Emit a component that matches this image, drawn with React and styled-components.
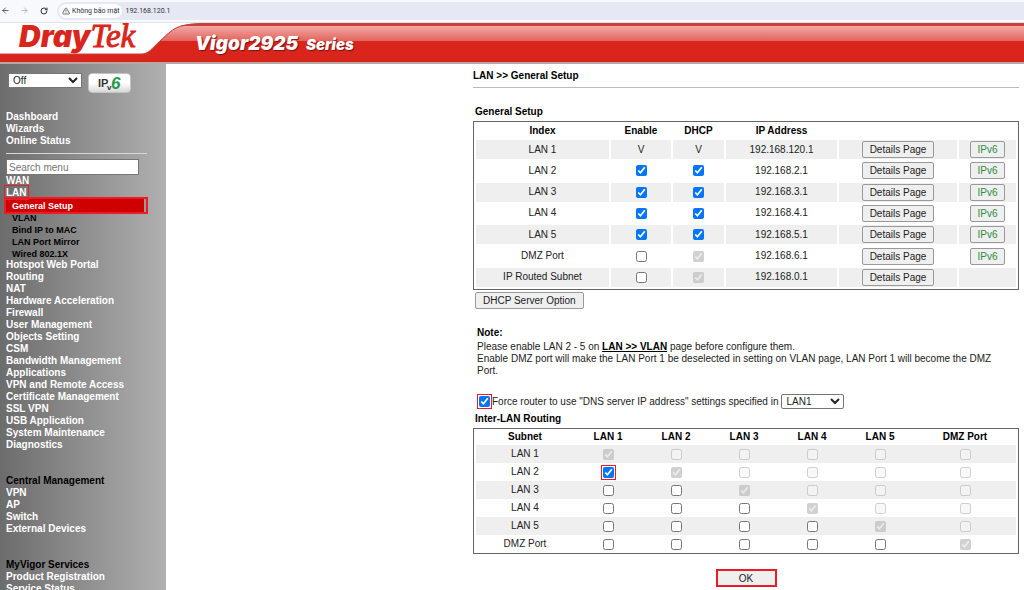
import React from "react";
import styled, { createGlobalStyle, css } from "styled-components";
import { ArrowLeft, ArrowRight, RotateCw, TriangleAlert } from "lucide-react";

const menuTop = ["Dashboard", "Wizards", "Online Status"];

const lanPages = ["General Setup", "VLAN", "Bind IP to MAC", "LAN Port Mirror", "Wired 802.1X"];

const menuMain = [
    "Hotspot Web Portal",
    "Routing",
    "NAT",
    "Hardware Acceleration",
    "Firewall",
    "User Management",
    "Objects Setting",
    "CSM",
    "Bandwidth Management",
    "Applications",
    "VPN and Remote Access",
    "Certificate Management",
    "SSL VPN",
    "USB Application",
    "System Maintenance",
    "Diagnostics",
];

const menuCentral = ["VPN", "AP", "Switch", "External Devices"];
const menuServices = ["Product Registration", "Service Status"];

const subnets = [
    { name: "LAN 1", ip: "192.168.120.1", fixed: true, ipv6: true },
    { name: "LAN 2", ip: "192.168.2.1", enable: true, ipv6: true },
    { name: "LAN 3", ip: "192.168.3.1", enable: true, ipv6: true },
    { name: "LAN 4", ip: "192.168.4.1", enable: true, ipv6: true },
    { name: "LAN 5", ip: "192.168.5.1", enable: true, ipv6: true },
    { name: "DMZ Port", ip: "192.168.6.1", enable: false, locked: true, ipv6: true },
    { name: "IP Routed Subnet", ip: "192.168.0.1", enable: false, locked: true },
];

const routes = ["LAN 1", "LAN 2", "LAN 3", "LAN 4", "LAN 5", "DMZ Port"];

function BrowserBar() {
    return (
        <BarLayout>
            <BarButton aria-label="Back">
                <ArrowLeft size={9} strokeWidth={2} />
            </BarButton>
            <BarButton aria-label="Forward" $dim>
                <ArrowRight size={9} strokeWidth={2} />
            </BarButton>
            <BarButton aria-label="Reload">
                <RotateCw size={8} strokeWidth={3} />
            </BarButton>
            <AddressBar>
                <SecurityChip>
                    <TriangleAlert size={8} strokeWidth={2} />
                    <span>Không bảo mật</span>
                </SecurityChip>
                <span>192.168.120.1</span>
            </AddressBar>
        </BarLayout>
    );
}

function Banner() {
    return (
        <BannerLayout>
            <BannerBrand>
                <BannerCurve viewBox="0 0 200 40" aria-hidden="true">
                    <path d="M0 0H200C176 1 174 5 160 18C151 26 149 31 141 31H0Z" fill="#fff" />
                    <path
                        d="M200 1C176 2 174 5 160 18C151 26 149 31 141 31H0"
                        fill="none"
                        stroke="#c4443c"
                        strokeWidth="1"
                    />
                </BannerCurve>
                <BrandName>
                    Dray<i>Tek</i>
                </BrandName>
            </BannerBrand>
            <ModelName>
                Vigor2925 <small>Series</small>
            </ModelName>
        </BannerLayout>
    );
}

function MenuLinks({ items }) {
    return items.map((item) => (
        <li key={item}>
            <MenuLink href="#">{item}</MenuLink>
        </li>
    ));
}

function Sidebar() {
    return (
        <SidebarLayout>
            <SidebarTools>
                <ModeSelect aria-label="Auto logout" defaultValue="Off">
                    <option>Off</option>
                </ModeSelect>
                <Ipv6Badge aria-label="IPv6">
                    <svg width="26" height="18" viewBox="0 0 26 18">
                        <text x="1" y="13" fontSize="11" fontWeight="700" fill="#333">
                            IP
                        </text>
                        <text x="10" y="16" fontSize="8" fontWeight="700" fill="#333">
                            v
                        </text>
                        <text x="14" y="15" fontSize="17" fontWeight="700" fontStyle="italic" fill="#1f9a48">
                            6
                        </text>
                    </svg>
                </Ipv6Badge>
            </SidebarTools>
            <MenuList>
                <MenuLinks items={menuTop} />
            </MenuList>
            <MenuRule />
            <SearchInput aria-label="Search menu" placeholder="Search menu" />
            <MenuList>
                <MenuLinks items={["WAN"]} />
                <li>
                    <MenuLink href="#" $marked>
                        LAN
                    </MenuLink>
                </li>
                {lanPages.map((page, i) => (
                    <li key={page}>
                        <SubLink href="#" $active={i === 0}>
                            {page}
                        </SubLink>
                    </li>
                ))}
                <MenuLinks items={menuMain} />
            </MenuList>
            <MenuTitle>Central Management</MenuTitle>
            <MenuList>
                <MenuLinks items={menuCentral} />
            </MenuList>
            <MenuTitle>MyVigor Services</MenuTitle>
            <MenuList>
                <MenuLinks items={menuServices} />
            </MenuList>
        </SidebarLayout>
    );
}

function SubnetTable() {
    return (
        <SetupTable>
            <colgroup>
                {[133, 60, 51, 111, 118, 57].map((width, i) => (
                    <Col key={i} $width={width} />
                ))}
            </colgroup>
            <thead>
                <tr>
                    <th>Index</th>
                    <th>Enable</th>
                    <th>DHCP</th>
                    <th>IP Address</th>
                    <th></th>
                    <th></th>
                </tr>
            </thead>
            <tbody>
                {subnets.map((row) => (
                    <tr key={row.name}>
                        <td>{row.name}</td>
                        <td>
                            {row.fixed ? (
                                "V"
                            ) : (
                                <Check aria-label={`Enable ${row.name}`} defaultChecked={row.enable} />
                            )}
                        </td>
                        <td>
                            {row.fixed ? (
                                "V"
                            ) : (
                                <Check
                                    aria-label={`DHCP ${row.name}`}
                                    defaultChecked
                                    disabled={row.locked}
                                />
                            )}
                        </td>
                        <td>{row.ip}</td>
                        <td>
                            <Button>Details Page</Button>
                        </td>
                        <td>{row.ipv6 && <Button $green>IPv6</Button>}</td>
                    </tr>
                ))}
            </tbody>
        </SetupTable>
    );
}

function RoutingTable() {
    return (
        <RouteTable>
            <colgroup>
                {[98, 68, 68, 68, 68, 68, 102].map((width, i) => (
                    <Col key={i} $width={width} />
                ))}
            </colgroup>
            <thead>
                <tr>
                    <th>Subnet</th>
                    {routes.map((name) => (
                        <th key={name}>{name}</th>
                    ))}
                </tr>
            </thead>
            <tbody>
                {routes.map((from, r) => (
                    <tr key={from}>
                        <td>{from}</td>
                        {routes.map((to, c) => {
                            const marked = r === 1 && c === 0;
                            return (
                                <td key={to}>
                                    <CheckFrame $marked={marked}>
                                        <Check
                                            aria-label={`${from} to ${to}`}
                                            defaultChecked={r === c || marked}
                                            disabled={c >= r}
                                        />
                                    </CheckFrame>
                                </td>
                            );
                        })}
                    </tr>
                ))}
            </tbody>
        </RouteTable>
    );
}

function App() {
    return (
        <>
            <GlobalStyle />
            <Page>
                <BrowserBar />
                <Banner />
                <Body>
                    <Sidebar />
                    <Main>
                        <PageTitle>LAN &gt;&gt; General Setup</PageTitle>
                        <SectionTitle>General Setup</SectionTitle>
                        <SubnetTable />
                        <OptionRow>
                            <Button>DHCP Server Option</Button>
                        </OptionRow>
                        <Note>
                            <h3>Note:</h3>
                            <p>
                                Please enable LAN 2 - 5 on <a href="#">LAN &gt;&gt; VLAN</a> page before
                                configure them.
                            </p>
                            <p>
                                Enable DMZ port will make the LAN Port 1 be deselected in setting on VLAN page,
                                LAN Port 1 will become the DMZ Port.
                            </p>
                        </Note>
                        <DnsRow>
                            <CheckFrame $marked>
                                <Check id="force-dns" defaultChecked />
                            </CheckFrame>
                            <label htmlFor="force-dns">
                                Force router to use "DNS server IP address" settings specified in
                            </label>
                            <LanSelect aria-label="DNS subnet" defaultValue="LAN1">
                                <option>LAN1</option>
                            </LanSelect>
                        </DnsRow>
                        <SectionTitle>Inter-LAN Routing</SectionTitle>
                        <RoutingTable />
                        <SubmitRow>
                            <OkButton>OK</OkButton>
                        </SubmitRow>
                    </Main>
                </Body>
            </Page>
        </>
    );
}

const GlobalStyle = createGlobalStyle`
    * {
        box-sizing: border-box;
    }
    body {
        margin: 0;
        background: #fff;
        color: #222;
        font-family: "Liberation Sans", Arial, sans-serif;
        font-size: 10px;
        line-height: 12px;
    }
    button, input, select {
        font: inherit;
    }
    h1, h2, h3, p, ul {
        margin: 0;
        padding: 0;
        font-size: inherit;
    }
`;

const Page = styled.div`
    height: 100vh;
    display: flex;
    flex-direction: column;
    overflow: hidden;
`;

// browser bar

const BarLayout = styled.div`
    flex: none;
    height: 23px;
    padding-bottom: 1px;
    display: flex;
    align-items: center;
    background: #f8f9fd;
    border-bottom: 1px solid #dfe1e8;
    color: #333;
    font-family: Roboto, "Noto Sans", sans-serif;
    font-size: 7px;
`;

const BarButton = styled.button.attrs({ type: "button" })`
    width: 19px;
    height: 18px;
    padding: 0 8px 0 0;
    display: flex;
    align-items: center;
    justify-content: center;
    background: none;
    border: none;
    color: ${(props) => (props.$dim ? "#a5a7ad" : "#333")};
`;

const AddressBar = styled.div`
    flex: 1;
    height: 18px;
    padding: 0 2px;
    display: flex;
    align-items: center;
    gap: 3px;
    background: #e6e9f4;
    border-radius: 9px 0 0 9px;
`;

const SecurityChip = styled.div`
    height: 14px;
    padding: 0 3px;
    display: flex;
    align-items: center;
    gap: 2px;
    background: #fbfcff;
    border-radius: 7px;
`;

// banner

const BannerLayout = styled.header`
    flex: none;
    height: 41px;
    display: flex;
    border-bottom: 2px solid #b9a7a3;
    background: linear-gradient(
        #c9423a 0 3px,
        #f3a8a4 3px,
        #e2645e 18px,
        #da251d 18px
    );
`;

const BannerBrand = styled.div`
    position: relative;
    width: 195px;
    padding-left: 19px;
`;

const BannerCurve = styled.svg`
    position: absolute;
    top: 0;
    left: 0;
    width: 200px;
    height: 40px;
`;

const BrandName = styled.div`
    position: relative;
    color: #da251d;
    font: italic 900 30px/26px Inter, sans-serif;
    i {
        font: italic 400 33px/26px "Liberation Serif", serif;
        -webkit-text-stroke: 1px #da251d;
    }
`;

const ModelName = styled.div`
    color: #fff;
    font: italic 900 19px/41px Inter, sans-serif;
    text-shadow: 1px 1px 1px #7c1510;
    white-space: nowrap;
    small {
        margin-left: 4px;
        font-size: 15px;
    }
`;

// sidebar

const Body = styled.div`
    flex: 1;
    min-height: 0;
    display: flex;
`;

const SidebarLayout = styled.nav`
    flex: none;
    width: 166px;
    padding: 9px 0 0 6px;
    overflow: hidden;
    background: linear-gradient(90deg, #6c6c6c, #b0b0b0);
    font-weight: bold;
`;

const SidebarTools = styled.div`
    padding-left: 2px;
    margin-bottom: 18px;
    display: flex;
    align-items: flex-start;
    gap: 6px;
`;

const ModeSelect = styled.select`
    width: 74px;
    height: 15px;
    background: #fff;
    border: 1px solid #767676;
    color: #222;
    font-weight: normal;
`;

const Ipv6Badge = styled.button.attrs({ type: "button" })`
    width: 43px;
    height: 20px;
    padding: 0;
    display: flex;
    align-items: center;
    justify-content: center;
    background: linear-gradient(#fff 50%, #d8d8d8);
    border: 1px solid #c4c4c4;
    border-radius: 4px;
`;

const MenuList = styled.ul`
    list-style: none;
    li {
        height: 12px;
    }
`;

const MenuLink = styled.a`
    color: #fff;
    text-decoration: none;
    ${(props) =>
        props.$marked &&
        css`
            outline: 1px solid #ed1c24;
            outline-offset: 1px;
        `}
`;

const SubLink = styled.a`
    display: block;
    width: 138px;
    padding: 1px 0 0 6px;
    color: #000;
    font-size: 9px;
    text-decoration: none;
    ${(props) =>
        props.$active &&
        css`
            background: #cf0000;
            border-right: 2px solid #999;
            width: 140px;
            color: #fff;
            outline: 2px solid #ed1c24;
        `}
`;

const MenuRule = styled.hr`
    width: 141px;
    height: 1px;
    margin: 6px 0 5px;
    border: none;
    background: #d8d8d8;
`;

const SearchInput = styled.input.attrs({ type: "search" })`
    display: block;
    width: 133px;
    height: 16px;
    padding: 0 2px;
    border: 1px solid #767676;
    background: #fff;
    font-weight: normal;
    &::placeholder {
        color: #757575;
    }
`;

const MenuTitle = styled.h2`
    margin-top: 24px;
    color: #000;
`;

// main

const Main = styled.main`
    flex: 1;
    min-width: 0;
    padding: 6px 5px 0 307px;
`;

const PageTitle = styled.h1`
    padding-bottom: 5px;
    margin-bottom: 18px;
    border-bottom: 1px solid #bbb;
    color: #000;
`;

const SectionTitle = styled.h2`
    padding-left: 2px;
    margin-bottom: 3px;
    color: #000;
`;

const Table = styled.table`
    width: 100%;
    table-layout: fixed;
    border: 1px solid #666;
    text-align: center;
    th,
    td {
        padding: 0;
    }
    th {
        color: #000;
    }
    tbody tr:nth-child(odd) td {
        background: #efefef;
    }
`;

const SetupTable = styled(Table)`
    height: 169px;
    border-spacing: 2px;
    th {
        height: 14px;
    }
    td {
        height: 19px;
    }
`;

const RouteTable = styled(Table)`
    padding: 0 2px;
    border-spacing: 0;
    th {
        height: 16px;
    }
    td {
        height: 18px;
    }
`;

const Col = styled.col`
    width: ${(props) => props.$width}px;
`;

const Check = styled.input.attrs({ type: "checkbox" })`
    display: block;
    width: 11px;
    height: 11px;
    margin: 0 auto;
`;

const CheckFrame = styled.div`
    flex: none;
    width: 15px;
    padding: 1px;
    margin: 0 auto;
    border: 1px solid ${(props) => (props.$marked ? "#ed1c24" : "transparent")};
`;

const Button = styled.button.attrs({ type: "button" })`
    height: 17px;
    padding: 0 ${(props) => (props.$green ? 6 : 7)}px;
    background: #efefef;
    border: 1px solid #999;
    border-radius: 2px;
    color: ${(props) => (props.$green ? "#2e8b3d" : "#222")};
    line-height: 15px;
    white-space: nowrap;
    vertical-align: middle;
`;

const OptionRow = styled.div`
    padding: 2px 2px 0;
    margin-bottom: 18px;
`;

const Note = styled.div`
    padding: 0 4px;
    margin-bottom: 17px;
    h3 {
        margin-bottom: 2px;
        color: #000;
    }
    a {
        color: #000;
        font-weight: bold;
    }
`;

const DnsRow = styled.div`
    padding-left: 4px;
    margin-bottom: 4px;
    display: flex;
    align-items: center;
    ${CheckFrame} {
        margin: 0;
    }
`;

const LanSelect = styled.select`
    width: 63px;
    height: 15px;
    margin-left: 3px;
    background: #fff;
    border: 1px solid #767676;
    border-radius: 2px;
    color: #222;
`;

const SubmitRow = styled.div`
    margin-top: 15px;
    display: flex;
    justify-content: center;
`;

const OkButton = styled(Button)`
    width: 61px;
    height: 18px;
    border: 2px solid #ed1c24;
    border-radius: 0;
`;

export default App;
